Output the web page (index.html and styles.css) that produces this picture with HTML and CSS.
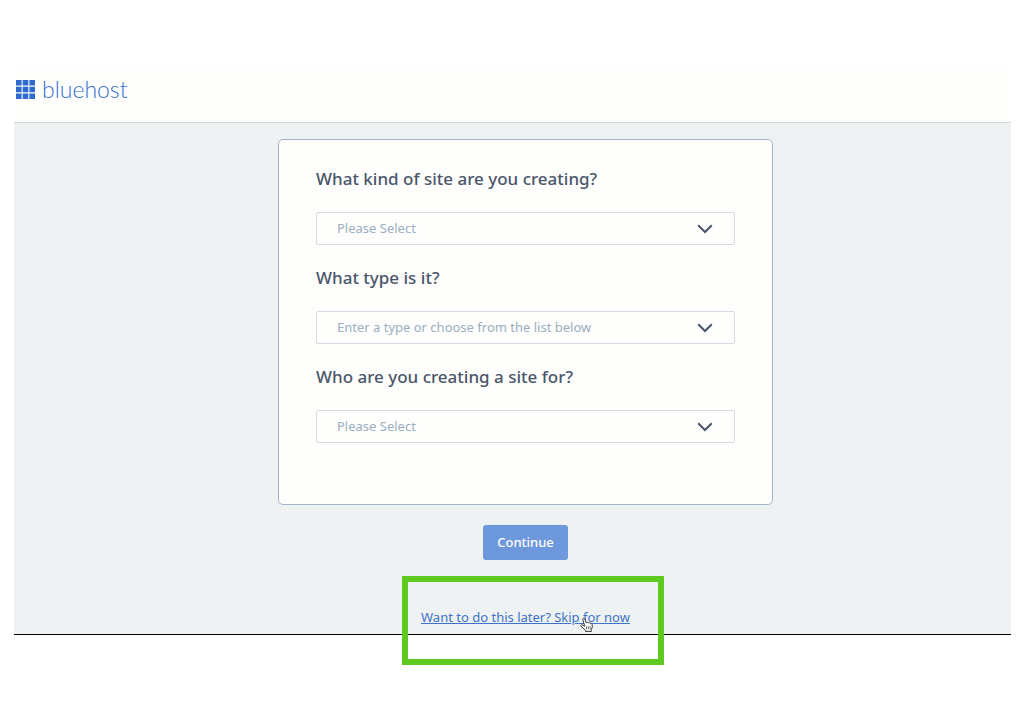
FILE: index.html
```html
<!DOCTYPE html>
<html lang="en">
<head>
<meta charset="utf-8">
<meta name="viewport" content="width=device-width, initial-scale=1">
<title>Bluehost</title>
<link rel="stylesheet" href="styles.css">
</head>
<body>
<div class="frame">
  <header class="header">
    <a class="brand" href="#">
      <svg class="brand-grid" viewBox="0 0 19 19" aria-hidden="true">
        <path d="M0 0h5.600v5.600H0zM6.700 0h5.600v5.600H6.700zM13.400 0H19v5.600h-5.600zM0 6.700h5.600v5.600H0zM6.700 6.700h5.600v5.600H6.700zM13.400 6.700H19v5.600h-5.600zM0 13.400h5.600V19H0zM6.700 13.400h5.600V19H6.700zM13.400 13.400H19V19h-5.600z"/>
      </svg>
      <span class="brand-name">bluehost</span>
    </a>
  </header>
  <main class="main">
    <form class="form">
      <div class="card">
        <div class="field">
          <label class="label" for="kind">What kind of site are you creating?</label>
          <div class="select-box">
            <select class="select" id="kind"><option>Please Select</option></select>
            <svg class="chevron" viewBox="0 0 16 10" aria-hidden="true"><path d="M1.200 1.200 8 8l6.800-6.800"/></svg>
          </div>
        </div>
        <div class="field">
          <label class="label" for="type">What type is it?</label>
          <div class="select-box">
            <select class="select" id="type"><option>Enter a type or choose from the list below</option></select>
            <svg class="chevron" viewBox="0 0 16 10" aria-hidden="true"><path d="M1.200 1.200 8 8l6.800-6.800"/></svg>
          </div>
        </div>
        <div class="field">
          <label class="label" for="audience">Who are you creating a site for?</label>
          <div class="select-box">
            <select class="select" id="audience"><option>Please Select</option></select>
            <svg class="chevron" viewBox="0 0 16 10" aria-hidden="true"><path d="M1.200 1.200 8 8l6.800-6.800"/></svg>
          </div>
        </div>
      </div>
      <button class="continue" type="button">Continue</button>
      <div class="skip">
        <a class="skip-link" href="#">Want to do this later? Skip for now</a>
        <span class="highlight"></span>
        <svg class="pointer" viewBox="0 0 13 15" aria-hidden="true">
          <path class="hand" d="M4.600 8.500 2.800 2.600C2.400 1.200 4.100.500 4.700 1.900L6.300 5.800C7 5 8 5.200 8.300 6 9 5.300 9.900 5.600 10.200 6.400 11 5.900 12 6.400 12.100 7.400L12.300 10.200 11.300 12.400V14.400H5.500V13.200L1 9.300C.2 8.400 1.300 7.300 2.300 7.900L4.600 9.400z"/>
          <path class="knuckles" d="M6.500 9.300v3M8.300 9.300v3M10.100 9.300v3"/>
        </svg>
      </div>
    </form>
  </main>
</div>
</body>
</html>
```
FILE: styles.css
```css
* {
  box-sizing: border-box;
}

body {
  margin: 0;
  background: #fff;
  font-family: "Noto Sans", "Open Sans", sans-serif;
  color: #4c566b;
}

.frame {
  margin: 68px 14px;
  border-bottom: 1px solid #000;
}

.header {
  padding: 7px 2px 19px;
  background: #fefefc;
  border-bottom: 1px solid #d3dadf;
}

.brand {
  display: inline-flex;
  align-items: center;
  gap: 7px;
  height: 28px;
  vertical-align: top;
  color: #3a6fcc;
  text-decoration: none;
}

.brand-grid {
  width: 19px;
  height: 19px;
  fill: #2f6ad0;
}

.brand-name {
  font-family: Lato, "Open Sans", sans-serif;
  font-size: 23px;
  font-weight: 300;
  line-height: 28px;
}

.main {
  padding: 16px 0 8px 26px;
  background: #eef2f3;
}

.form {
  display: flex;
  flex-direction: column;
  align-items: center;
}

.card {
  display: flex;
  flex-direction: column;
  gap: 21px;
  width: 100%;
  max-width: 495px;
  padding: 27px 37px 61px;
  background: #fefefd;
  border: 1px solid #a3b4c4;
  border-radius: 5px;
}

.field {
  display: flex;
  flex-direction: column;
  gap: 21px;
}

.label {
  font-size: 17px;
  font-weight: 500;
  line-height: 24px;
}

.select-box {
  display: grid;
  align-items: center;
}

.select {
  grid-area: 1 / 1;
  width: 100%;
  height: 33px;
  padding: 0 48px 1px 20px;
  appearance: none;
  background: #fefefd;
  border: 1px solid #d6dae4;
  border-radius: 2px;
  font-family: inherit;
  font-size: 13px;
  color: #9bafc0;
}

.chevron {
  grid-area: 1 / 1;
  justify-self: end;
  width: 16px;
  height: 10px;
  margin-right: 22px;
  fill: none;
  stroke: #4c566b;
  stroke-width: 2;
  pointer-events: none;
}

.continue {
  height: 35px;
  margin-top: 20px;
  padding: 0 14px 1px;
  background: #6d98dc;
  border: 0;
  border-radius: 3px;
  font-family: inherit;
  font-size: 13px;
  font-weight: 500;
  color: #fff;
}

.skip {
  position: relative;
  margin-top: 48px;
  line-height: 18px;
  font-size: 13px;
}

.skip-link {
  display: block;
  color: #3d73c9;
}

.highlight {
  position: absolute;
  top: -32px;
  left: -19px;
  width: 262px;
  height: 89px;
  border: 6px solid #5dc921;
  pointer-events: none;
}

.pointer {
  position: absolute;
  top: 9px;
  right: 37px;
  width: 13px;
  height: 15px;
  pointer-events: none;
}

.hand {
  fill: #fff;
  stroke: #333;
}

.knuckles {
  fill: none;
  stroke: #444;
  stroke-width: 0.8;
}
```
